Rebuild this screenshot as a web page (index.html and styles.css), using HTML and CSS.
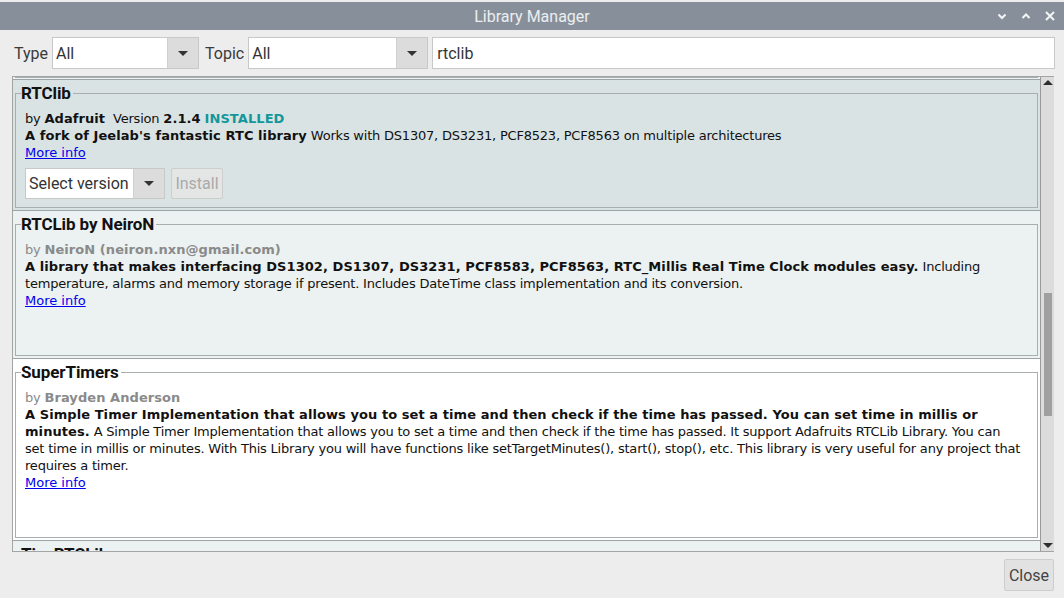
FILE: index.html
```html
<!DOCTYPE html>
<html>
<head>
<meta charset="utf-8">
<title>Library Manager</title>
<link rel="stylesheet" href="styles.css">
</head>
<body>
<div class="titlebar">
  <span class="title">Library Manager</span>
  <div class="wctl">
    <svg class="wicon" viewBox="0 0 10 10" width="10" height="10"><path d="M1.5 3.5 L5 7 L8.5 3.5" fill="none" stroke="#f4f5f6" stroke-width="2"/></svg>
    <svg class="wicon" viewBox="0 0 10 10" width="10" height="10"><path d="M1.5 7 L5 3.5 L8.5 7" fill="none" stroke="#f4f5f6" stroke-width="2"/></svg>
    <svg class="wicon" viewBox="0 0 10 10" width="10" height="10"><path d="M1 1 L9 9 M9 1 L1 9" fill="none" stroke="#f4f5f6" stroke-width="2"/></svg>
  </div>
</div>

<div class="filters">
  <span class="flabel">Type</span>
  <div class="combo combo-type"><span class="combo-text">All</span><span class="combo-arrow"><span class="tri"></span></span></div>
  <span class="flabel">Topic</span>
  <div class="combo combo-topic"><span class="combo-text">All</span><span class="combo-arrow"><span class="tri"></span></span></div>
  <div class="search">rtclib</div>
</div>

<div class="list">
  <div class="viewport">
    <div class="tail"><div class="tail-line"></div></div>

    <div class="item item-sel">
      <fieldset class="frame">
        <legend class="name">RTClib</legend>
        <div class="body">
          <div class="line">by <b>Adafruit</b>&nbsp; Version <b>2.1.4</b> <b class="installed">INSTALLED</b></div>
          <div class="line"><b>A fork of Jeelab's fantastic RTC library</b> Works with DS1307, DS3231, PCF8523, PCF8563 on multiple architectures</div>
          <div class="line"><a href="#" class="more">More info</a></div>
          <div class="controls">
            <div class="combo combo-ver"><span class="combo-text">Select version</span><span class="combo-arrow"><span class="tri"></span></span></div>
            <div class="btn btn-disabled">Install</div>
          </div>
        </div>
      </fieldset>
    </div>

    <div class="item item-alt">
      <fieldset class="frame">
        <legend class="name">RTCLib by NeiroN</legend>
        <div class="body">
          <div class="line author">by <b>NeiroN (neiron.nxn@gmail.com)</b></div>
          <div class="line"><b>A library that makes interfacing DS1302, DS1307, DS3231, PCF8583, PCF8563, RTC_Millis Real Time Clock modules easy.</b> Including temperature, alarms and memory storage if present. Includes DateTime class implementation and its conversion.</div>
          <div class="line"><a href="#" class="more">More info</a></div>
          <div class="controls hidden">
            <div class="combo combo-ver"><span class="combo-text">Select version</span><span class="combo-arrow"><span class="tri"></span></span></div>
            <div class="btn">Install</div>
          </div>
        </div>
      </fieldset>
    </div>

    <div class="item item-white">
      <fieldset class="frame">
        <legend class="name">SuperTimers</legend>
        <div class="body">
          <div class="line author">by <b>Brayden Anderson</b></div>
          <div class="line"><b>A Simple Timer Implementation that allows you to set a time and then check if the time has passed. You can set time in millis or minutes.</b> A Simple Timer Implementation that allows you to set a time and then check if the time has passed. It support Adafruits RTCLib Library. You can set time in millis or minutes. With This Library you will have functions like setTargetMinutes(), start(), stop(), etc. This library is very useful for any project that requires a timer.</div>
          <div class="line"><a href="#" class="more">More info</a></div>
          <div class="controls hidden">
            <div class="combo combo-ver"><span class="combo-text">Select version</span><span class="combo-arrow"><span class="tri"></span></span></div>
            <div class="btn">Install</div>
          </div>
        </div>
      </fieldset>
    </div>

    <div class="item item-alt item-last">
      <fieldset class="frame">
        <legend class="name">TinyRTCLib</legend>
      </fieldset>
    </div>
  </div>
  <div class="scrollbar">
    <div class="sb-btn"><span class="sb-up"></span></div>
    <div class="sb-track"><div class="sb-thumb"></div></div>
    <div class="sb-btn"><span class="sb-down"></span></div>
  </div>
</div>

<div class="footer">
  <div class="btn btn-close">Close</div>
</div>
</body>
</html>
```

FILE: styles.css
```css
* { box-sizing: border-box; }

html, body {
  margin: 0;
  padding: 0;
  background: #ededed;
  font-family: Roboto, "Liberation Sans", sans-serif;
  width: 1064px;
  height: 598px;
  overflow: hidden;
}

.titlebar {
  margin-top: 2px;
  height: 28px;
  background: #87909a;
  display: flex;
  align-items: center;
  justify-content: center;
  position: relative;
}

.title {
  color: #eceef0;
  font-size: 16px;
}

.wctl {
  position: absolute;
  right: 9px;
  top: 9px;
  display: flex;
  gap: 14px;
}

.wicon { display: block; }

.filters {
  margin-top: 7px;
  height: 32px;
  padding-left: 14px;
  padding-right: 9px;
  display: flex;
  align-items: stretch;
}

.flabel {
  font-size: 16px;
  color: #3a3a3a;
  display: flex;
  align-items: center;
  margin-right: 4px;
}

.combo {
  display: flex;
  background: #fff;
  border: 1px solid #c8c8c8;
  font-size: 16px;
  color: #333;
}

.combo-type { width: 147px; margin-right: 6px; }
.combo-topic { width: 180px; margin-right: 4px; }

.combo-text {
  flex: 1;
  display: flex;
  align-items: center;
  padding-left: 3px;
  white-space: nowrap;
}

.combo-arrow {
  width: 31px;
  background: #dcdcdc;
  border-left: 1px solid #d0d0d0;
  display: flex;
  align-items: center;
  justify-content: center;
}

.tri {
  width: 0;
  height: 0;
  border-left: 5px solid transparent;
  border-right: 5px solid transparent;
  border-top: 5px solid #333;
}

.search {
  flex: 1;
  background: #fff;
  border: 1px solid #c8c8c8;
  font-size: 16px;
  color: #333;
  display: flex;
  align-items: center;
  padding-left: 4px;
}

.list {
  margin: 7px 10px 0 12px;
  height: 476px;
  border: 1px solid #a4a4a4;
  border-right: none;
  display: flex;
}

.viewport {
  flex: 1;
  overflow: hidden;
  border-right: 1px solid #9a9a9a;
  font-family: "DejaVu Sans", sans-serif;
  font-size: 13px;
  color: #111;
}

.tail {
  height: 3px;
  background: #ecf1f1;
  padding: 0 2px;
  border-bottom: 1px solid #9ea4a4;
}

.tail-line {
  height: 1px;
  background: #a9afaf;
}

.item {
  padding: 5px 2px 2px 2px;
  border-bottom: 1px solid #9ea4a4;
}

.item-sel { background: #dae3e3; }
.item-alt { background: #ecf1f1; }
.item-white { background: #ffffff; }
.item-last { height: 60px; }
.item-last .frame { height: 50px; }

.frame {
  margin: 0;
  padding: 0 4px 8px 5px;
  border: 1px solid #a9afaf;
  min-width: 0;
}

.name {
  padding: 0 2px 0 0;
  font-family: Roboto, "Liberation Sans", sans-serif;
  font-weight: 700;
  font-size: 17px;
  line-height: 17px;
  color: #111;
  letter-spacing: -0.1px;
}

.body {
  padding: 8px 11px 0 4px;
}

.line {
  line-height: 17px;
  letter-spacing: -0.21px;
}

.line b {
  letter-spacing: 0.07px;
}

.author { color: #8a8a8a; }

.installed { color: #12979b; }

.more {
  color: #0000ee;
  text-decoration: underline;
  letter-spacing: 0;
}

.controls {
  margin-top: 7px;
  display: flex;
  gap: 6px;
  height: 31px;
}

.hidden { visibility: hidden; }

.combo-ver {
  width: 140px;
  font-family: Roboto, "Liberation Sans", sans-serif;
  letter-spacing: 0;
}

.btn {
  display: flex;
  align-items: center;
  justify-content: center;
  background: #e2e2e2;
  border: 1px solid #cdcdcd;
  border-radius: 2px;
  font-family: Roboto, "Liberation Sans", sans-serif;
  font-size: 16px;
  color: #444;
  padding: 0 5px;
  letter-spacing: 0;
}

.btn-disabled {
  color: #aaaaaa;
  background: #e4e6e6;
  width: 52px;
}

.scrollbar {
  width: 13px;
  background: #dcdcdc;
  display: flex;
  flex-direction: column;
}

.sb-btn {
  height: 11px;
  display: flex;
  align-items: center;
  justify-content: center;
}

.sb-up {
  width: 0;
  height: 0;
  border-left: 5px solid transparent;
  border-right: 5px solid transparent;
  border-bottom: 5px solid #2e2e2e;
}

.sb-down {
  width: 0;
  height: 0;
  border-left: 5px solid transparent;
  border-right: 5px solid transparent;
  border-top: 5px solid #2e2e2e;
}

.sb-track {
  flex: 1;
  padding: 205px 2px 0 3px;
}

.sb-thumb {
  height: 123px;
  background: #a0a0a0;
}

.footer {
  display: flex;
  justify-content: flex-end;
  padding: 7px 10px 0 0;
}

.btn-close {
  width: 50px;
  height: 32px;
  padding: 0;
}
```
